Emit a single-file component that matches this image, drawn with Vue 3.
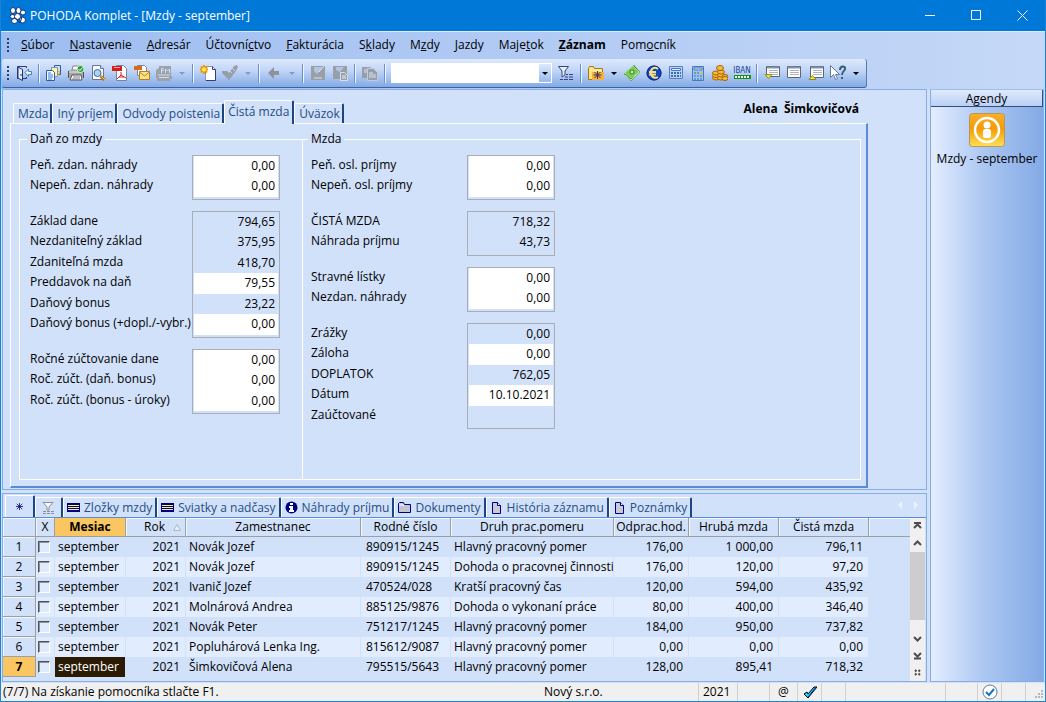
<script setup>
import { ref } from 'vue'

const menu = [
  ['', 'S', 'úbor'], ['', 'N', 'astavenie'], ['', 'A', 'dresár'], ['Účtovní', 'c', 'tvo'],
  ['', 'F', 'akturácia'], ['S', 'k', 'lady'], ['M', 'z', 'dy'], ['', 'J', 'azdy'],
  ['Maje', 't', 'ok'], ['', 'Z', 'áznam'], ['Pom', 'o', 'cník'],
]

const icons = {
  exit: '<path d="M1.500 14V1.500h9V3M10.500 12v1.500H7" fill="none" stroke="#2c3a78"/><path d="M2 2l4.500 2.500v11L2 13z" fill="#e6efff" stroke="#26336e"/><path d="M5 9v2" stroke="#26336e"/><path d="M9 7.500l3.500-3.500v2.500H15.500v3h-3v2z" fill="#eaf5ff" stroke="#4a7fb8"/>',
  copies: '<path d="M8.500.5h6v9h-6z" fill="#cfe3ff" stroke="#2a5ca8"/><path d="M5.500 2.500h6v9h-6z" fill="#fff3a0" stroke="#7b94b8"/><path d="M.5 5.500h6l2 2v8h-8z" fill="#f4f9ff" stroke="#2a5ca8"/><path d="M2 8h3M2 10h5M2 12h5M2 14h4" stroke="#3d7fd0"/><path d="M12 6l2 1-3 4" stroke="#e0a818" fill="none"/>',
  print: '<path d="M4 5l1-4h7l-1 4z" fill="#fff" stroke="#7c8088"/><path d="M0 6l2-1h11l3 2v6H0z" fill="#a3a6a9"/><path d="M1 7h13" stroke="#e8e8e8"/><path d="M.5 6v7M15.500 7v6" stroke="#505357"/><path d="M4 10h9l1 5H2z" fill="#fff" stroke="#55585c"/><path d="M5 12h7M4 14h8" stroke="#75787c"/><circle cx="12.500" cy="4" r="3.500" fill="#2c9d3f" stroke="#d8f0d8"/><path d="M10.500 4l1.500 1.500L14.500 2.500" stroke="#fff" fill="none"/>',
  preview: '<path d="M2.500.5h8l3 3v11h-11z" fill="#f9fbff" stroke="#63779c"/><path d="M10.500.5v3h3" fill="#d5e1f5" stroke="#63779c"/><circle cx="7.500" cy="8" r="3.500" fill="#a9d3f5" stroke="#456a91"/><path d="M10.500 11l4 4" stroke="#b87518" stroke-width="3"/><path d="M11 11l4 4" stroke="#f4bf4e"/>',
  pdf: '<path d="M4.500.5h7l3 3v12h-10z" fill="#fff" stroke="#7486a3"/><path d="M0 1h10v5H0z" fill="#d81d1d"/><path d="M2 2.500h6" stroke="#f8a8a0"/><path d="M9 7v3l-4 4M9 10l5 3M7 12h5" stroke="#d32222" fill="none"/>',
  mail: '<path d="M3.500.5h7l2 2v8h-9z" fill="#fff" stroke="#7486a3"/><path d="M0 1h8v4H0z" fill="#d96a19"/><path d="M5.500 6.500h10v8h-10z" fill="#ffe18a" stroke="#b98018"/><path d="M5.500 7l5 4 5-4" stroke="#b98018" fill="none"/>',
  fax: '<path d="M3 3V1h12v10h1v3h-2v2H1v-3H0V6l1-2z" fill="#9ca1aa"/><path d="M5.500 8V3.500H8M6 5.500h2M9.500 8V4l2 2 2-2v4M2 10h12M3 12.500h10" stroke="#d0ddf3" fill="none"/>',
  create: '<path d="M5.500 1.500h7l3 3v11h-10z" fill="#fff" stroke="#8c94b4"/><path d="M12.500 1.500v3h3v11H6" fill="none" stroke="#333c80"/><path d="M4 0v9M0 4.500h8M1 1.500l6 6M7 1.500l-6 6" stroke="#e89a12" stroke-width="2"/><circle cx="4" cy="4.500" r="2" fill="#fff254"/>',
  post: '<path d="M0 6h5l2 2 5-7 3-1 1 2-2 4-7 9L0 8z" fill="#979eaa"/><path d="M10 3l3 3M8 6l2 2" stroke="#c4d3eb"/>',
  back: '<path d="M2 8l6-6v4h5v4H8v4z" fill="#8d939d"/>',
  save: '<path d="M1 1h14v14H1z" fill="#999ea7"/><path d="M4 2h9L7 9 4 6z" fill="#b3c5e4"/><path d="M9 7l5-6M4 13h8" stroke="#d6e2f6"/>',
  saveNew: '<path d="M1 1h14v13H1z" fill="#999ea7"/><path d="M4 2h8L8 7 4 5z" fill="#b3c5e4"/><path d="M8.500 7.500h4l3 3v5h-7z" fill="#999ea7" stroke="#d4e1f5"/><path d="M10 11h4M10 13h4" stroke="#e7efff"/>',
  duplicate: '<path d="M0 2h8l2 2v9H0z" fill="#999ea7"/><path d="M5.500 3.500h6l4 4v8h-10z" fill="#999ea7" stroke="#bdcce4"/><path d="M2 5h3M2 7h3M7 8h4M7 10h7M7 12h7" stroke="#d7e4f8"/>',
  filter: '<path d="M.5 1.500h10L7 6v4L4 12V6z" fill="#e4f0ff" stroke="#37486c"/><path d="M2 14.500h3M6 14.500h4M11 14.500h4M7 12h3M11 12h4M8 9.500h2M11 9.500h4" stroke="#394080"/>',
  folder: '<path d="M.5 3.500l1-2h4l1 2h8v11H.5z" fill="#ffe27c" stroke="#a87812"/><path d="M2 5.500h12v-1H2" fill="#fff3b6"/><path d="M4 7h12v8H4z" fill="#f5b13a"/><path d="M9.500 6v8M5.500 10h8M6.500 7l6 6M12.500 7l-6 6" stroke="#3d2c63"/>',
  cash: '<path d="M0 9l10-9 6 7-9 9z" fill="#348c22"/><path d="M1 8l8-7 6 6-8 6z" fill="#76c952" stroke="#a9da8c"/><circle cx="8" cy="7" r="2" fill="#c8efb0" stroke="#338721"/><path d="M1 10l6 5 8-8" stroke="#baf09c" fill="none"/>',
  euro: '<circle cx="8" cy="8" r="7.500" fill="#1743bc"/><circle cx="8" cy="8" r="7" fill="none" stroke="#0b2a87"/><path d="M12 4c-4-3-7.500 0-7 4 0 4 4 6 7 4M3 7h7M3 9.500h7" stroke="#f5e07a" stroke-width="2" fill="none"/>',
  calculator: '<path d="M1.500 1.500h13v12h-13z" fill="#b9d4f6" stroke="#5580bd"/><path d="M3.500 3.500h9v2h-9z" fill="#dbeaff" stroke="#4a76b7"/><path d="M3 8h10M3 11h10" stroke="#416cac" stroke-width="2" stroke-dasharray="2 1"/>',
  calculatorTall: '<path d="M2.500 1.500h11v14h-11z" fill="#9ac5ef" stroke="#4d78b4"/><path d="M4 3h8v2H4z" fill="#d3e6ff" stroke="#517caf"/><path d="M4 8h8M4 11h8M4 14h8" stroke="#416cac" stroke-dasharray="2 1"/><path d="M10 7h2v2h-2z" fill="#f5b735"/>',
  coins: '<g fill="#f6bd35" stroke="#a96109"><ellipse cx="4" cy="13" rx="3.500" ry="2"/><ellipse cx="4" cy="10.500" rx="3.500" ry="2"/><ellipse cx="4" cy="8" rx="3.500" ry="2"/><ellipse cx="9" cy="13" rx="3.500" ry="2"/><ellipse cx="9" cy="10" rx="3.500" ry="2"/><ellipse cx="9" cy="7" rx="3.500" ry="2"/><ellipse cx="8" cy="3" rx="3.500" ry="2.500"/><ellipse cx="13" cy="11.500" rx="3" ry="2"/><ellipse cx="13" cy="13.500" rx="3" ry="2"/></g>',
  rowsDown: '<path d="M2.500 1.500h13v10h-13z" fill="#fff" stroke="#5b6678"/><path d="M3 2.500h12" stroke="#8093b0" stroke-width="2"/><path d="M5 5.500h9M5 7.500h9M5 9.500h9" stroke="#aab3c2"/><path d="M1 9.500h7l-3.500 4z" fill="#f5e52e" stroke="#928d2a"/>',
  rows: '<path d="M1.500 1.500h13v11h-13z" fill="#fff" stroke="#5b6678"/><path d="M2 2.500h12" stroke="#8093b0" stroke-width="2"/><path d="M4 5.500h9M4 7.500h9M4 9.500h9" stroke="#aab3c2"/>',
  rowsUp: '<path d="M2.500 1.500h13v11h-13z" fill="#fff" stroke="#5b6678"/><path d="M3 2.500h12" stroke="#8093b0" stroke-width="2"/><path d="M5 5.500h9M5 7.500h9M5 9.500h9" stroke="#aab3c2"/><path d="M1 14.500h7l-3.500-4z" fill="#f5e52e" stroke="#928d2a"/>',
  help: '<path d="M.5.5v12l3-3 2 5 2-1-2-4h4z" fill="#fff" stroke="#657b9e"/><path d="M10 5c0-5 6-4 5-1 0 2-3 2-3 6M12 12v2" stroke="#355f76" stroke-width="2" fill="none"/>',
}

const toolbar = [
  ['exit', 'Koniec'], '|', ['copies', 'Záznamy'], ['print', 'Tlač'], ['preview', 'Náhľad'], ['pdf', 'PDF'], ['mail', 'E-mail'],
  ['fax', 'Fiškálna tlač', 1], 'v-', '|', ['create', 'Nový'], ['post', 'Zaúčtovať', 1], 'v-', '|', ['back', 'Späť', 1], 'v-', '|',
  ['save', 'Uložiť', 1], ['saveNew', 'Uložiť a nový', 1], '|', ['duplicate', 'Kópia', 1], '|', 'combo', ['filter', 'Filter'], '|',
  ['folder', 'Priečinok'], 'v', ['cash', 'Pokladňa'], ['euro', 'Euro'], ['calculator', 'Kalkulačka'], ['calculatorTall', 'Výpočet'],
  ['coins', 'Mince'], 'iban', '|', ['rowsDown', 'Nadol'], ['rows', 'Tabuľka'], ['rowsUp', 'Nahor'], ['help', 'Pomoc'], 'v',
]

const pageTabs = ['Mzda', 'Iný príjem', 'Odvody poistenia', 'Čistá mzda', 'Úväzok']
const activeTab = ref('Čistá mzda')

// Each field: label, value, editable
const sections = [
  { title: 'Daň zo mzdy', groups: [
    [['Peň. zdan. náhrady', '0,00', 1], ['Nepeň. zdan. náhrady', '0,00', 1]],
    [['Základ dane', '794,65'], ['Nezdaniteľný základ', '375,95'], ['Zdaniteľná mzda', '418,70'], ['Preddavok na daň', '79,55', 1], ['Daňový bonus', '23,22'], ['Daňový bonus (+dopl./-vybr.)', '0,00', 1]],
    [['Ročné zúčtovanie dane', '0,00', 1], ['Roč. zúčt. (daň. bonus)', '0,00', 1], ['Roč. zúčt. (bonus - úroky)', '0,00', 1]],
  ] },
  { title: 'Mzda', groups: [
    [['Peň. osl. príjmy', '0,00', 1], ['Nepeň. osl. príjmy', '0,00', 1]],
    [['ČISTÁ MZDA', '718,32'], ['Náhrada príjmu', '43,73']],
    [['Stravné lístky', '0,00', 1], ['Nezdan. náhrady', '0,00', 1]],
    [['Zrážky', '0,00'], ['Záloha', '0,00', 1], ['DOPLATOK', '762,05'], ['Dátum', '10.10.2021', 1], ['Zaúčtované', '']],
  ] },
]

const gridTabs = [
  ['list', 'Zložky mzdy'], ['list', 'Sviatky a nadčasy'], ['info', 'Náhrady príjmu'],
  ['dir', 'Dokumenty'], ['doc', 'História záznamu'], ['doc', 'Poznámky'],
]
const tabIcons = {
  list: '<path d="M0 2h13v9H0z" fill="#000080"/><path d="M1 4.500h11M1 6.500h11M1 8.500h11" stroke="#fff27a"/>',
  info: '<circle cx="6.500" cy="6.500" r="6" fill="#000080"/><path d="M5 2h3v2H5zM4 5h4v4h1v2H4V9h1V7H4z" fill="#fff"/>',
  dir: '<path d="M.5 2.500l1-1h4l1 2h6v8H.5z" fill="#c3c6cf" stroke="#000080"/><path d="M1 4h5" stroke="#fff"/>',
  doc: '<path d="M2.500 1.500h5l3 3v8h-8z" fill="#c8cbd2" stroke="#000080"/><path d="M7.500 1.500v3h3" fill="#fff" stroke="#000080"/>',
}

const rows = [
  ['Novák Jozef', '890915/1245', 'Hlavný pracovný pomer', '176,00', '1 000,00', '796,11'],
  ['Novák Jozef', '890915/1245', 'Dohoda o pracovnej činnosti', '176,00', '120,00', '97,20'],
  ['Ivanič Jozef', '470524/028', 'Kratší pracovný čas', '120,00', '594,00', '435,92'],
  ['Molnárová Andrea', '885125/9876', 'Dohoda o vykonaní práce', '80,00', '400,00', '346,40'],
  ['Novák Peter', '751217/1245', 'Hlavný pracovný pomer', '184,00', '950,00', '737,82'],
  ['Popluhárová Lenka Ing.', '815612/9087', 'Hlavný pracovný pomer', '0,00', '0,00', '0,00'],
  ['Šimkovičová Alena', '795515/5643', 'Hlavný pracovný pomer', '128,00', '895,41', '718,32'],
]
const selected = 6
</script>

<template>
  <div class="window">
    <header class="titlebar">
      <svg class="logo" viewBox="0 0 17 17">
        <g fill="#fff" stroke="#12357c">
          <ellipse cx="4" cy="3.500" rx="2.500" ry="3" /><ellipse cx="9.500" cy="3.500" rx="2.500" ry="3" /><ellipse cx="14" cy="5.500" rx="2.500" ry="2.500" />
          <ellipse cx="3.500" cy="9.500" rx="2.500" ry="2" /><ellipse cx="8.500" cy="9.500" rx="3" ry="3" /><ellipse cx="5.500" cy="14" rx="3" ry="2.500" /><ellipse cx="13.500" cy="13" rx="3" ry="3" />
        </g>
        <path d="M6 11l5 5 2-6" fill="none" stroke="#12357c" />
      </svg>
      <h1>POHODA Komplet - [Mzdy - september]</h1>
      <div class="window-buttons">
        <button aria-label="Minimalizovať"><svg viewBox="0 0 11 11"><path d="M0 5.500h10" /></svg></button>
        <button aria-label="Maximalizovať"><svg viewBox="0 0 11 11"><path d="M.5.5h9v9h-9z" /></svg></button>
        <button aria-label="Zavrieť"><svg viewBox="0 0 11 11"><path d="M.5.5l10 10M10.500.5l-10 10" /></svg></button>
      </div>
    </header>

    <div class="bars">
      <nav class="menubar">
        <span class="grip"></span>
        <button v-for="m in menu" :key="m[2]" :class="{ strong: m[2] === 'áznam' }">{{ m[0] }}<u>{{ m[1] }}</u>{{ m[2] }}</button>
      </nav>
      <div class="toolbar">
        <span class="grip"></span>
        <template v-for="(t, i) in toolbar" :key="i">
          <span v-if="t === '|'" class="sep"></span>
          <button v-else-if="t === 'v' || t === 'v-'" class="drop" :class="{ off: t === 'v-' }" aria-label="Viac"><i></i></button>
          <div v-else-if="t === 'combo'" class="combo">
            <input aria-label="Hľadať" type="text" /><button aria-label="Rozbaliť"><i></i></button>
          </div>
          <button v-else-if="t === 'iban'" class="tool iban"><b>IBAN</b><span></span></button>
          <button v-else class="tool" :aria-label="t[1]" :disabled="!!t[2]"><svg viewBox="0 0 16 16" v-html="icons[t[0]]"></svg></button>
        </template>
      </div>
    </div>

    <div class="body">
      <main>
        <section class="agenda">
          <div class="agenda-head">
            <div class="tabs">
              <button v-for="t in pageTabs" :key="t" :class="{ active: t === activeTab }" @click="activeTab = t">{{ t }}</button>
            </div>
            <strong>Alena&nbsp; Šimkovičová</strong>
          </div>
          <form class="page" @submit.prevent>
            <fieldset v-for="(s, si) in sections" :key="si">
              <legend>{{ s.title }}</legend>
              <div v-for="(g, gi) in s.groups" :key="gi" class="group">
                <div class="labels">
                  <label v-for="(f, fi) in g" :key="fi" :for="`f${si}-${gi}-${fi}`">{{ f[0] }}</label>
                </div>
                <div class="values">
                  <input v-for="(f, fi) in g" :id="`f${si}-${gi}-${fi}`" :key="fi" type="text" :value="f[1]" :readonly="!f[2]" />
                </div>
              </div>
            </fieldset>
          </form>
        </section>

        <section class="list">
          <div class="list-tabs">
            <button class="star active" aria-label="Všetky"><svg viewBox="0 0 9 9"><path d="M4.500 0v9M0 4.500h9M1 1l7 7M8 1l-7 7" stroke="#000080" /></svg></button>
            <button class="funnel" aria-label="Výber"><svg viewBox="0 0 13 13"><path d="M1 1.500h10L7 6v3H5V6z" fill="#f4f6f8" stroke="#8c8f95" /><path d="M1 10.500h11M1 12.500h11" stroke="#8c8f95" stroke-dasharray="3 1" /></svg></button>
            <button v-for="t in gridTabs" :key="t[1]"><svg viewBox="0 0 13 13" v-html="tabIcons[t[0]]"></svg>{{ t[1] }}</button>
            <span class="nav"><i></i><i></i></span>
          </div>
          <div class="grid">
            <table>
              <colgroup>
                <col class="c-num" /><col class="c-x" /><col class="c-month" /><col class="c-year" /><col class="c-name" /><col class="c-id" /><col class="c-type" /><col class="c-hours" /><col class="c-sum" /><col class="c-sum" /><col />
              </colgroup>
              <thead>
                <tr>
                  <th></th><th>X</th><th class="sorted">Mesiac</th><th class="year">Rok<svg viewBox="0 0 8 7"><path d="M.5 6.500h7L4 .5z" fill="#e6effd" stroke="#b3b8c0" /></svg></th><th>Zamestnanec</th><th>Rodné číslo</th>
                  <th>Druh prac.pomeru</th><th>Odprac.hod.</th><th>Hrubá mzda</th><th>Čistá mzda</th><th></th>
                </tr>
              </thead>
              <tbody>
                <tr v-for="(r, i) in rows" :key="i" :class="{ current: i === selected }">
                  <th scope="row">{{ i + 1 }}</th>
                  <td class="check"><input type="checkbox" :aria-label="`Riadok ${i + 1}`" /></td>
                  <td class="month">september</td>
                  <td class="num">2021</td>
                  <td>{{ r[0] }}</td><td class="id">{{ r[1] }}</td><td class="type">{{ r[2] }}</td>
                  <td class="num">{{ r[3] }}</td><td class="num">{{ r[4] }}</td><td class="num">{{ r[5] }}</td><td class="rest"></td>
                </tr>
              </tbody>
            </table>
            <div class="scroll">
              <button aria-label="Prvý"><svg viewBox="0 0 9 9"><path d="M1 1h7M1 6l3.500-3.500L8 6" /></svg></button>
              <button aria-label="Hore"><svg viewBox="0 0 9 9"><path d="M1 6l3.500-3.500L8 6" /></svg></button>
              <span class="thumb"></span><span class="track"></span>
              <button aria-label="Dole"><svg viewBox="0 0 9 9"><path d="M1 3l3.500 3.500L8 3" /></svg></button>
              <button aria-label="Posledný"><svg viewBox="0 0 9 9"><path d="M1 2l3.500 3.500L8 2M1 7.500h7" /></svg></button>
              <button aria-label="Značka"><svg viewBox="0 0 9 9"><path d="M2 2l1.500 1.500M7 2L5.500 3.500M2 7l1.500-1.500M7 7L5.500 5.500" /></svg></button>
            </div>
          </div>
        </section>
      </main>

      <aside>
        <h2>Agendy</h2>
        <button>
          <svg viewBox="0 0 36 34">
            <defs><linearGradient id="gold" x1="0" y1="0" x2="0" y2="1"><stop offset="0" stop-color="#f8b02c" /><stop offset=".45" stop-color="#f39c07" /><stop offset="1" stop-color="#ffdf57" /></linearGradient></defs>
            <rect x=".5" y=".5" width="35" height="33" rx="3" fill="url(#gold)" stroke="#b99755" />
            <circle cx="18" cy="17" r="12" fill="none" stroke="#fff" stroke-width="2.500" />
            <circle cx="18" cy="12" r="3.500" fill="#fff" /><rect x="14" y="16" width="8" height="9" rx="2.500" fill="#fff" />
          </svg>
          Mzdy - september
        </button>
      </aside>
    </div>

    <footer>
      <span class="message">(7/7) Na získanie pomocníka stlačte F1.</span>
      <span class="company">Nový s.r.o.</span>
      <span class="cell w39">2021</span><span class="cell w32"></span><span class="cell w28 mid">@</span>
      <span class="cell w24 mid"><svg class="pen" viewBox="0 0 14 13"><path d="M1 8l3-2 1 2 6-7h3L5 12z" fill="#19d6ef" stroke="#000" /><path d="M13 1L5 11" stroke="#1030c8" /></svg></span>
      <span class="cell w24"></span><span class="cell w100"></span><span class="cell w32"></span>
      <span class="cell w24 mid"><svg class="ok" viewBox="0 0 16 16"><circle cx="8" cy="8" r="7" fill="#fff" stroke="#5b7f9d" /><path d="M4 8l3 3 5-6" fill="none" stroke="#1674c4" stroke-width="2" /></svg></span>
      <span class="cell w24"></span>
      <span class="cell w20"><svg class="resize" viewBox="0 0 9 9"><path d="M7 1h2M4 4h2M7 4h2M1 7h2M4 7h2M7 7h2" stroke="#b8b8b8" stroke-width="2" /></svg></span>
    </footer>
  </div>
</template>

<style>
body { margin: 0; }
</style>

<style scoped>
* { box-sizing: border-box; }
.window {
  min-height: 100vh; display: flex; flex-direction: column; background: #d1e1f9;
  border: 1px solid #1883d7; border-top: 0; color: #000;
  font: 12px/16px "Open Sans", "Noto Sans", sans-serif;
}
button { font: inherit; color: inherit; border: 0; background: none; padding: 0; margin: 0; display: flex; align-items: center; justify-content: center; white-space: nowrap; }
button svg { flex: none; fill: none; }
input { font: inherit; color: inherit; border: 0; border-radius: 0; margin: 0; padding: 0; outline: 0; min-width: 0; }

.titlebar { display: flex; align-items: center; height: 31px; background: #0078d7; color: #fff; padding-left: 8px; }
.logo { width: 17px; height: 17px; margin-right: 4px; }
h1 { font-size: 12px; font-weight: 400; margin: 0; flex: 1; white-space: nowrap; }
.window-buttons { display: flex; }
.window-buttons button { width: 46px; height: 31px; }
.window-buttons svg { width: 11px; height: 11px; stroke: #fff; }

.bars { border-top: 1px solid #dfeafc; background: linear-gradient(90deg, #9dbdf0, #c5d8f7); }
.menubar { display: flex; align-items: center; height: 27px; gap: 15px; padding-bottom: 2px; }
.menubar button { height: 24px; }
.menubar .strong { font-weight: 700; }
.menubar .grip { margin-right: -3px; }
.grip { flex: none; width: 2px; height: 14px; margin-left: 6px; background: repeating-linear-gradient(#27406f 0 2px, transparent 2px 4px); }
.toolbar {
  display: flex; align-items: center; width: fit-content; height: 29px; margin: 0 0 1px 1px; padding-right: 3px;
  background: linear-gradient(#dde9fd, #c2d6f7 40%, #83aae5); border-bottom: 1px solid #3f6299; border-right: 1px solid #5479b4; border-radius: 2px 3px 3px 2px;
}
.toolbar .grip { margin: 0 4px 0 5px; }
.tool { width: 22px; height: 24px; }
.tool svg { width: 16px; height: 16px; }
.sep { width: 8px; height: 19px; background: linear-gradient(90deg, transparent 3px, #6890cf 3px 4px, #f0f6ff 4px 5px, transparent 5px); }
.drop { width: 14px; height: 24px; }
.drop i, .combo i { border: 3px solid transparent; border-top-color: #000; border-bottom: 0; }
.drop.off i { border-top-color: #8c9ab2; }
.combo { display: flex; width: 161px; height: 20px; margin: 0 3px 0 2px; background: #fff; border: 1px solid #fff; }
.combo input { flex: 1; width: 0; background: #fff; }
.combo button { width: 12px; background: linear-gradient(#dce9fd, #98baee); }
.iban { flex-direction: column; color: #123f9e; font-family: "Liberation Sans Narrow", "DejaVu Sans Condensed", sans-serif; line-height: 8px; }
.iban b { font-size: 8px; font-weight: 400; }
.iban span { width: 17px; height: 4px; border: 1px solid #149214; background: repeating-linear-gradient(90deg, #fff 0 2px, #149214 2px 3px); }

.body { flex: 1; display: flex; gap: 3px; padding: 0 1px 1px; }
main { flex: 1; min-width: 0; display: flex; flex-direction: column; gap: 3px; }
.agenda { flex: 1; display: flex; flex-direction: column; border: 1px solid #87ade6; padding: 10px 58px 1px 7px; }
.agenda-head { display: flex; align-items: flex-end; justify-content: space-between; padding-right: 9px; }
.agenda-head strong { align-self: flex-start; padding-top: 1px; font-weight: 700; }
.tabs { display: flex; align-items: flex-end; padding-left: 3px; }
.tabs button { height: 20px; padding: 0 2px 0 4px; border: 1px solid #fff; border-bottom: 0; border-right: 2px solid #1c4582; border-radius: 2px 2px 0 0; color: #264d84; }
.tabs .active { height: 24px; margin-bottom: -1px; padding: 0 3px 2px; background: #d1e1f9; z-index: 1; }
.page { flex: 1; display: flex; border: 1px solid #fff; border-right: 2px solid #5b8bd6; border-bottom: 2px solid #5b8bd6; padding: 7px 5px 6px 8px; }
fieldset { margin: 0; padding: 8px 0 0 10px; border: 1px solid #fff; min-width: 0; }
fieldset:first-child { width: 284px; }
fieldset:last-child { flex: 1; border-left: 0; padding-left: 8px; }
legend { padding: 0 3px; margin-left: -3px; height: 16px; }
.group { display: flex; margin-bottom: 11px; }
.labels { width: 162px; }
fieldset:last-child .labels { width: 156px; }
.labels label { display: block; height: 20px; line-height: 20px; white-space: nowrap; }
.labels label:nth-child(even), .values input:nth-child(even) { height: 21px; }
.values { width: 88px; display: flex; flex-direction: column; border: 1px solid #a9adb5; padding: 0 1px 2px; }
.values input { height: 20px; width: 100%; padding: 0 3px 2px 0; text-align: right; background: #fff; }
.values input:read-only { background: transparent; }

.list { border: 1px solid #87ade6; }
.list-tabs { display: flex; align-items: flex-end; height: 24px; padding-left: 2px; border-bottom: 1px solid #5b8bd6; color: #264d84; }
.list-tabs button { height: 20px; gap: 4px; padding: 0 3px; border-top: 1px solid #fff; border-left: 1px solid #fff; border-right: 2px solid #1c4582; border-radius: 2px 2px 0 0; }
.list-tabs button svg { width: 13px; height: 13px; }
.list-tabs .star { width: 30px; height: 22px; }
.list-tabs .star svg { width: 7px; height: 7px; }
.list-tabs .funnel { width: 28px; }
.nav { margin: 0 8px 8px auto; display: flex; gap: 12px; }
.nav i { border: 4px solid transparent; border-left: 0; border-right-color: #edf3fc; }
.nav i:last-child { border-left: 4px solid #edf3fc; border-right: 0; }

.grid { display: flex; padding-right: 1px; }
table { flex: 1; width: 0; table-layout: fixed; border-collapse: separate; border-spacing: 0; margin-bottom: 4px; }
.c-num { width: 33px; } .c-x { width: 19px; } .c-month { width: 71px; } .c-year { width: 60px; } .c-name { width: 175px; }
.c-id { width: 90px; } .c-type { width: 163px; } .c-hours { width: 75px; } .c-sum { width: 90px; }
th, td { height: 20px; padding: 0 4px 0 3px; white-space: nowrap; overflow: hidden; text-align: left; border-right: 1px solid #d1e1f9; }
th { padding: 0; text-align: center; font-weight: 400; border-right: 1px solid #9b9fa6; border-bottom: 1px solid #9b9fa6; box-shadow: inset 1px 1px #f2f7ff; }
thead th { height: 19px; }
thead th:last-child { border-right: 0; }
thead .sorted, .current th { background: #fac661; font-weight: 700; box-shadow: none; }
.year svg { width: 8px; height: 7px; margin-left: 8px; }
.year { text-align: right; padding-right: 4px; }
.num { text-align: right; padding-right: 5px; }
.id { padding-left: 5px; }
.type { padding-right: 0; }
tbody tr:nth-child(even) td { background: #e1ecff; }
tbody tr td.rest { background: #d1e1f9; border: 0; }
.current .month { background: #2b1b04; color: #fff; }
.check { padding: 0 2px; }
.check input { appearance: none; display: block; width: 12px; height: 12px; border: 1px solid #4d5158; border-right-color: #fff; border-bottom-color: #fff; box-shadow: inset 1px 1px #8d929b; background: #dfeafc; }
.scroll { width: 15px; background: #f0f0f0; display: flex; flex-direction: column; }
.scroll button { height: 17px; }
.scroll svg { width: 9px; height: 9px; stroke: #4d4d4d; stroke-width: 2; }
.thumb { height: 68px; background: #cdcdcd; }
.track { flex: 1; }

aside { width: 114px; border: 1px solid #87ade6; border-top-color: #9dbdf0; background: linear-gradient(90deg, #e3edff, #a9c5f1 50%, #84aae5); }
h2 { margin: 0 0 6px; height: 17px; font-size: 12px; line-height: 17px; font-weight: 400; text-align: center; border-bottom: 1px solid #344e7b; border-right: 1px solid #344e7b; background: linear-gradient(#dfeafd, #b9d0f5); }
aside button { width: 100%; flex-direction: column; gap: 4px; }
aside svg { width: 36px; height: 34px; }

footer { display: flex; align-items: stretch; height: 18px; line-height: 18px; background: #f0f0f0; white-space: nowrap; }
.message { flex: 1; padding-left: 2px; }
.company { width: 154px; }
.cell { display: flex; align-items: center; border-left: 1px solid #d0d0d0; padding-left: 4px; }
.mid { justify-content: center; padding: 0; }
.w20 { width: 20px; align-items: flex-end; justify-content: flex-end; } .w24 { width: 24px; } .w28 { width: 28px; } .w32 { width: 32px; } .w39 { width: 39px; } .w100 { width: 100px; }
.pen { width: 14px; height: 13px; fill: none; }
.ok { width: 16px; height: 16px; }
.resize { width: 9px; height: 9px; margin: 0 2px 2px 0; }
</style>
